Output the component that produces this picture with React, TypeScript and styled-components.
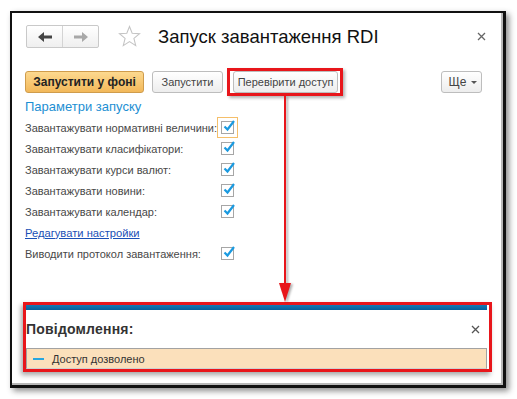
import React from 'react';
import styled, { createGlobalStyle } from 'styled-components';

const GlobalStyle = createGlobalStyle`
  body {
    margin: 0;
    background: #fff;
    font-family: 'Liberation Sans', Arial, sans-serif;
  }
`;

const Page = styled.div`
  padding: 11px 0 0 10px;
  width: 517px;
  height: 399px;
  box-sizing: border-box;
`;

const Window = styled.div`
  position: relative;
  width: 496px;
  height: 377px;
  box-sizing: border-box;
  border: 2px solid #111;
  border-right-width: 3px;
  border-bottom-width: 3px;
  background: #fff;
  box-shadow: inset -2px -2px 0 #b8b8b8, 3px 3px 6px rgba(0, 0, 0, 0.45);
  display: flex;
  flex-direction: column;
`;

const Header = styled.div`
  display: flex;
  align-items: center;
  padding: 12px 17px 0 14px;
  height: 23px;
`;

const NavGroup = styled.div`
  display: flex;
  height: 23px;
  box-sizing: border-box;
  border: 1px solid #c9c9c9;
  border-radius: 2px;
  background: linear-gradient(#ffffff, #efefef);
`;

const NavButton = styled.div<{ $divider?: boolean }>`
  width: 35px;
  display: flex;
  align-items: center;
  justify-content: center;
  border-left: ${(p) => (p.$divider ? '1px solid #d4d4d4' : 'none')};
`;

const Star = styled.svg`
  margin-left: 19px;
`;

const Title = styled.div`
  margin-left: 17px;
  font-size: 18.5px;
  color: #111;
  white-space: nowrap;
`;

const CloseIcon = styled.svg`
  margin-left: auto;
`;

const Toolbar = styled.div`
  display: flex;
  align-items: center;
  gap: 8px;
  height: 28px;
  margin-top: 20px;
  padding: 0 21px 0 13px;
`;

const Button = styled.div<{ $primary?: boolean; $width: number }>`
  width: ${(p) => p.$width}px;
  height: 22px;
  box-sizing: border-box;
  display: flex;
  align-items: center;
  justify-content: center;
  gap: 5px;
  font-size: ${(p) => (p.$primary ? '12px' : '11px')};
  white-space: nowrap;
  border-radius: 3px;
  color: ${(p) => (p.$primary ? '#222' : '#444')};
  font-weight: ${(p) => (p.$primary ? 'bold' : 'normal')};
  border: 1px solid ${(p) => (p.$primary ? '#cf9c4c' : '#bdbdbd')};
  background: ${(p) =>
    p.$primary ? 'linear-gradient(#fdd98f, #f2b85a)' : 'linear-gradient(#ffffff, #ededed)'};
`;

const Highlight = styled.div`
  margin-left: -4px;
  padding: 0 2px 0 3px;
  border: 3px solid #e8161b;
  box-shadow: 2px 2px 3px rgba(0, 0, 0, 0.3);
`;

const MoreButton = styled(Button)`
  margin-left: auto;
  padding-left: 3px;
  font-size: 12px;
`;

const Caret = styled.span`
  width: 0;
  height: 0;
  border-left: 3px solid transparent;
  border-right: 3px solid transparent;
  border-top: 3px solid #555;
`;

const Form = styled.div`
  display: grid;
  grid-template-columns: 192px auto;
  grid-auto-rows: 21px;
  align-items: center;
  padding: 0 13px;
  color: #484848;
  font-size: 11px;
`;

const SectionTitle = styled.div`
  grid-column: 1 / -1;
  height: 20px;
  line-height: 20px;
  font-size: 13px;
  color: #1d8fd3;
`;

const Label = styled.div`
  white-space: nowrap;
`;

const Link = styled.div`
  grid-column: 1 / -1;
  color: #1a4fb6;
  text-decoration: underline;
  font-size: 11.2px;
`;

const CheckFrame = styled.div<{ $focused?: boolean }>`
  width: 21px;
  height: 21px;
  box-sizing: border-box;
  border: 1px solid ${(p) => (p.$focused ? '#f5bf6a' : 'transparent')};
  display: flex;
  align-items: center;
  justify-content: center;
`;

const Box = styled.div`
  position: relative;
  width: 13px;
  height: 13px;
  box-sizing: border-box;
  border: 1px solid #a6a6a6;
  background: #fff;
`;

const Tick = styled.svg`
  position: absolute;
  left: 0;
  top: -3px;
`;

const Spacer = styled.div`
  flex: 1;
`;

const MessagesFrame = styled.div`
  margin: 0 11px 13px 11px;
  height: 70px;
  box-sizing: border-box;
  border: 3px solid #e8161b;
  padding-right: 2px;
  box-shadow: -2px 3px 5px rgba(0, 0, 0, 0.35);
  display: flex;
  flex-direction: column;
`;

const BlueBar = styled.div`
  height: 5px;
  background: linear-gradient(#1479b6, #07609a);
`;

const MessagesHeader = styled.div`
  display: flex;
  align-items: center;
  height: 38px;
  padding-right: 7px;
`;

const MessagesTitle = styled.div`
  font-size: 14px;
  font-weight: bold;
  color: #333;
  letter-spacing: 0.2px;
`;

const MessageRow = styled.div`
  height: 21px;
  box-sizing: border-box;
  border: 1px solid #a2a2a2;
  border-bottom-color: #d0d0d0;
  background: #fbe0bb;
  display: flex;
  align-items: center;
  padding-left: 6px;
  gap: 8px;
  font-size: 11px;
  color: #333;
`;

const Dash = styled.span`
  width: 11px;
  height: 2px;
  background: #27a6df;
`;

const Arrow = styled.svg`
  position: absolute;
  left: 267px;
  top: 83px;
  filter: drop-shadow(2px 1px 1px rgba(0, 0, 0, 0.3));
`;

const Checkbox = ({ focused }: { focused?: boolean }) => (
  <CheckFrame $focused={focused}>
    <Box>
      <Tick width="14" height="14" viewBox="0 0 14 14">
        <path d="M2.5 7.5 L5.5 10.5 L12 2" fill="none" stroke="#1a9ae0" strokeWidth="2.2" />
      </Tick>
    </Box>
  </CheckFrame>
);

const rows = [
  { label: 'Завантажувати нормативні величини:', focused: true },
  { label: 'Завантажувати класифікатори:' },
  { label: 'Завантажувати курси валют:' },
  { label: 'Завантажувати новини:' },
  { label: 'Завантажувати календар:' },
];

const App = () => (
  <>
    <GlobalStyle />
    <Page>
      <Window>
        <Header>
          <NavGroup>
            <NavButton>
              <svg width="14" height="10" viewBox="0 0 14 10">
                <path d="M0 5 L6 0 L6 3.5 L14 3.5 L14 6.5 L6 6.5 L6 10 Z" fill="#444" />
              </svg>
            </NavButton>
            <NavButton $divider>
              <svg width="14" height="10" viewBox="0 0 14 10">
                <path d="M14 5 L8 0 L8 3.5 L0 3.5 L0 6.5 L8 6.5 L8 10 Z" fill="#a8a8a8" />
              </svg>
            </NavButton>
          </NavGroup>
          <Star width="23" height="23" viewBox="0 0 24 24">
            <path
              d="M12 1.5 L14.8 8.6 L22.5 9.1 L16.6 14 L18.5 21.5 L12 17.4 L5.5 21.5 L7.4 14 L1.5 9.1 L9.2 8.6 Z"
              fill="none"
              stroke="#c4c4c4"
              strokeWidth="1.1"
            />
          </Star>
          <Title>Запуск завантаження RDI</Title>
          <CloseIcon width="9" height="9" viewBox="0 0 9 9">
            <path d="M1 1 L8 8 M8 1 L1 8" stroke="#666" strokeWidth="1.3" />
          </CloseIcon>
        </Header>

        <Toolbar>
          <Button $primary $width={119}>Запустити у фоні</Button>
          <Button $width={71}>Запустити</Button>
          <Highlight>
            <Button $width={105}>Перевірити доступ</Button>
          </Highlight>
          <MoreButton $width={41}>
            Ще
            <Caret />
          </MoreButton>
        </Toolbar>

        <Form>
          <SectionTitle>Параметри запуску</SectionTitle>
          {rows.map((r) => (
            <React.Fragment key={r.label}>
              <Label>{r.label}</Label>
              <Checkbox focused={r.focused} />
            </React.Fragment>
          ))}
          <Link>Редагувати настройки</Link>
          <Label>Виводити протокол завантаження:</Label>
          <Checkbox />
        </Form>

        <Spacer />

        <MessagesFrame>
          <BlueBar />
          <MessagesHeader>
            <MessagesTitle>Повідомлення:</MessagesTitle>
            <CloseIcon width="9" height="9" viewBox="0 0 9 9">
              <path d="M1 1 L8 8 M8 1 L1 8" stroke="#555" strokeWidth="1.3" />
            </CloseIcon>
          </MessagesHeader>
          <MessageRow>
            <Dash />
            Доступ дозволено
          </MessageRow>
        </MessagesFrame>

        <Arrow width="12" height="206" viewBox="0 0 12 206">
          <path d="M6 0 L6 190" stroke="#e8161b" strokeWidth="2" />
          <path d="M0 187 L12 187 L6 206 Z" fill="#e8161b" />
        </Arrow>
      </Window>
    </Page>
  </>
);

export default App;
